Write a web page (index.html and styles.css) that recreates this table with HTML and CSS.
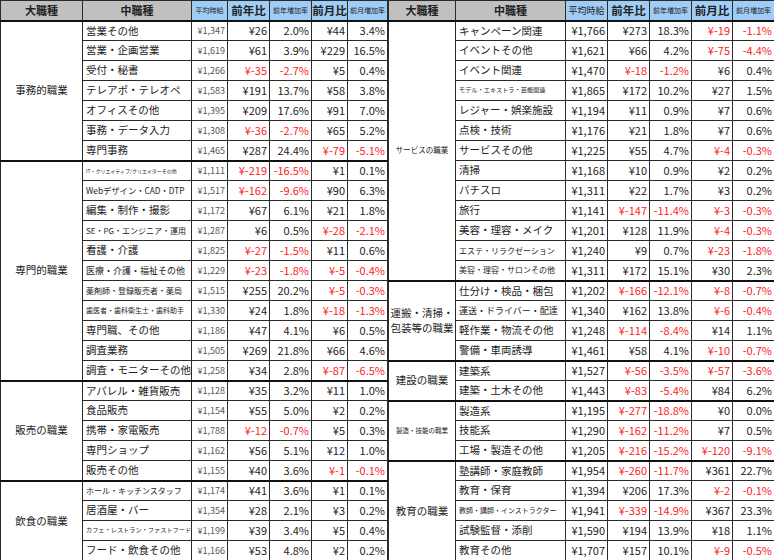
FILE: index.html
```html
<!DOCTYPE html>
<html lang="ja">
<head>
<meta charset="utf-8">
<title>職種別 平均時給</title>
<link rel="stylesheet" href="styles.css">
</head>
<body>
<div class="sheet">
<table class="t left">
<colgroup><col style="width:82px"><col style="width:109px"><col style="width:36px"><col style="width:42px"><col style="width:42px"><col style="width:36px"><col style="width:40px"></colgroup>
<thead><tr class="hd"><th class="g">大職種</th><th class="g">中職種</th><th class="b tiny">平均時給</th><th class="b big">前年比</th><th class="b tiny">前年増加率</th><th class="b big">前月比</th><th class="b tiny">前月増加率</th></tr></thead>
<tbody>
<tr><td class="cat" rowspan="7">事務的職業</td><td class="job">営業その他</td><td class="avg">¥1,347</td><td>¥26</td><td>2.0%</td><td>¥44</td><td>3.4%</td></tr>
<tr><td class="job">営業・企画営業</td><td class="avg">¥1,619</td><td>¥61</td><td>3.9%</td><td>¥229</td><td>16.5%</td></tr>
<tr><td class="job">受付・秘書</td><td class="avg">¥1,266</td><td class="n">¥-35</td><td class="n">-2.7%</td><td>¥5</td><td>0.4%</td></tr>
<tr><td class="job">テレアポ・テレオペ</td><td class="avg">¥1,583</td><td>¥191</td><td>13.7%</td><td>¥58</td><td>3.8%</td></tr>
<tr><td class="job">オフィスその他</td><td class="avg">¥1,395</td><td>¥209</td><td>17.6%</td><td>¥91</td><td>7.0%</td></tr>
<tr><td class="job">事務・データ入力</td><td class="avg">¥1,308</td><td class="n">¥-36</td><td class="n">-2.7%</td><td>¥65</td><td>5.2%</td></tr>
<tr><td class="job">専門事務</td><td class="avg">¥1,465</td><td>¥287</td><td>24.4%</td><td class="n">¥-79</td><td class="n">-5.1%</td></tr>
</tbody>
<tbody>
<tr><td class="cat" rowspan="11">専門的職業</td><td class="job s5">IT・クリエイティブ/クリエイターその他</td><td class="avg">¥1,111</td><td class="n">¥-219</td><td class="n">-16.5%</td><td>¥1</td><td>0.1%</td></tr>
<tr><td class="job s85">Webデザイン・CAD・DTP</td><td class="avg">¥1,517</td><td class="n">¥-162</td><td class="n">-9.6%</td><td>¥90</td><td>6.3%</td></tr>
<tr><td class="job">編集・制作・撮影</td><td class="avg">¥1,172</td><td>¥67</td><td>6.1%</td><td>¥21</td><td>1.8%</td></tr>
<tr><td class="job s8">SE・PG・エンジニア・運用</td><td class="avg">¥1,287</td><td>¥6</td><td>0.5%</td><td class="n">¥-28</td><td class="n">-2.1%</td></tr>
<tr><td class="job">看護・介護</td><td class="avg">¥1,825</td><td class="n">¥-27</td><td class="n">-1.5%</td><td>¥11</td><td>0.6%</td></tr>
<tr><td class="job s9">医療・介護・福祉その他</td><td class="avg">¥1,229</td><td class="n">¥-23</td><td class="n">-1.8%</td><td class="n">¥-5</td><td class="n">-0.4%</td></tr>
<tr><td class="job s8">薬剤師・登録販売者・薬局</td><td class="avg">¥1,515</td><td>¥255</td><td>20.2%</td><td class="n">¥-5</td><td class="n">-0.3%</td></tr>
<tr><td class="job s7">歯医者・歯科衛生士・歯科助手</td><td class="avg">¥1,330</td><td>¥24</td><td>1.8%</td><td class="n">¥-18</td><td class="n">-1.3%</td></tr>
<tr><td class="job">専門職、その他</td><td class="avg">¥1,186</td><td>¥47</td><td>4.1%</td><td>¥6</td><td>0.5%</td></tr>
<tr><td class="job">調査業務</td><td class="avg">¥1,505</td><td>¥269</td><td>21.8%</td><td>¥66</td><td>4.6%</td></tr>
<tr><td class="job">調査・モニターその他</td><td class="avg">¥1,258</td><td>¥34</td><td>2.8%</td><td class="n">¥-87</td><td class="n">-6.5%</td></tr>
</tbody>
<tbody>
<tr><td class="cat" rowspan="5">販売の職業</td><td class="job">アパレル・雑貨販売</td><td class="avg">¥1,128</td><td>¥35</td><td>3.2%</td><td>¥11</td><td>1.0%</td></tr>
<tr><td class="job">食品販売</td><td class="avg">¥1,154</td><td>¥55</td><td>5.0%</td><td>¥2</td><td>0.2%</td></tr>
<tr><td class="job">携帯・家電販売</td><td class="avg">¥1,788</td><td class="n">¥-12</td><td class="n">-0.7%</td><td>¥5</td><td>0.3%</td></tr>
<tr><td class="job">専門ショップ</td><td class="avg">¥1,162</td><td>¥56</td><td>5.1%</td><td>¥12</td><td>1.0%</td></tr>
<tr><td class="job">販売その他</td><td class="avg">¥1,155</td><td>¥40</td><td>3.6%</td><td class="n">¥-1</td><td class="n">-0.1%</td></tr>
</tbody>
<tbody>
<tr><td class="cat" rowspan="4">飲食の職業</td><td class="job s8">ホール・キッチンスタッフ</td><td class="avg">¥1,174</td><td>¥41</td><td>3.6%</td><td>¥1</td><td>0.1%</td></tr>
<tr><td class="job">居酒屋・バー</td><td class="avg">¥1,354</td><td>¥28</td><td>2.1%</td><td>¥3</td><td>0.2%</td></tr>
<tr><td class="job s6">カフェ・レストラン・ファストフード</td><td class="avg">¥1,199</td><td>¥39</td><td>3.4%</td><td>¥5</td><td>0.4%</td></tr>
<tr><td class="job">フード・飲食その他</td><td class="avg">¥1,166</td><td>¥53</td><td>4.8%</td><td>¥2</td><td>0.2%</td></tr>
</tbody>
</table>
<table class="t right">
<colgroup><col style="width:67px"><col style="width:110px"><col style="width:42px"><col style="width:42px"><col style="width:42px"><col style="width:41px"><col style="width:42px"></colgroup>
<thead><tr class="hd"><th class="g">大職種</th><th class="g">中職種</th><th class="b small">平均時給</th><th class="b big">前年比</th><th class="b tiny">前年増加率</th><th class="b big">前月比</th><th class="b tiny">前月増加率</th></tr></thead>
<tbody>
<tr><td class="cat c8" rowspan="13">サービスの職業</td><td class="job">キャンペーン関連</td><td>¥1,766</td><td>¥273</td><td>18.3%</td><td class="n">¥-19</td><td class="n">-1.1%</td></tr>
<tr><td class="job">イベントその他</td><td>¥1,621</td><td>¥66</td><td>4.2%</td><td class="n">¥-75</td><td class="n">-4.4%</td></tr>
<tr><td class="job">イベント関連</td><td>¥1,470</td><td class="n">¥-18</td><td class="n">-1.2%</td><td>¥6</td><td>0.4%</td></tr>
<tr><td class="job s6">モデル・エキストラ・芸能関連</td><td>¥1,865</td><td>¥172</td><td>10.2%</td><td>¥27</td><td>1.5%</td></tr>
<tr><td class="job">レジャー・娯楽施設</td><td>¥1,194</td><td>¥11</td><td>0.9%</td><td>¥7</td><td>0.6%</td></tr>
<tr><td class="job">点検・技術</td><td>¥1,176</td><td>¥21</td><td>1.8%</td><td>¥7</td><td>0.6%</td></tr>
<tr><td class="job">サービスその他</td><td>¥1,225</td><td>¥55</td><td>4.7%</td><td class="n">¥-4</td><td class="n">-0.3%</td></tr>
<tr><td class="job">清掃</td><td>¥1,168</td><td>¥10</td><td>0.9%</td><td>¥2</td><td>0.2%</td></tr>
<tr><td class="job">パチスロ</td><td>¥1,311</td><td>¥22</td><td>1.7%</td><td>¥3</td><td>0.2%</td></tr>
<tr><td class="job">旅行</td><td>¥1,141</td><td class="n">¥-147</td><td class="n">-11.4%</td><td class="n">¥-3</td><td class="n">-0.3%</td></tr>
<tr><td class="job">美容・理容・メイク</td><td>¥1,201</td><td>¥128</td><td>11.9%</td><td class="n">¥-4</td><td class="n">-0.3%</td></tr>
<tr><td class="job s8">エステ・リラクゼーション</td><td>¥1,240</td><td>¥9</td><td>0.7%</td><td class="n">¥-23</td><td class="n">-1.8%</td></tr>
<tr><td class="job s8">美容・理容・サロンその他</td><td>¥1,311</td><td>¥172</td><td>15.1%</td><td>¥30</td><td>2.3%</td></tr>
</tbody>
<tbody>
<tr><td class="cat" rowspan="4">運搬・清掃・<br>包装等の職業</td><td class="job">仕分け・検品・梱包</td><td>¥1,202</td><td class="n">¥-166</td><td class="n">-12.1%</td><td class="n">¥-8</td><td class="n">-0.7%</td></tr>
<tr><td class="job s9">運送・ドライバー・配達</td><td>¥1,340</td><td>¥162</td><td>13.8%</td><td class="n">¥-6</td><td class="n">-0.4%</td></tr>
<tr><td class="job">軽作業・物流その他</td><td>¥1,248</td><td class="n">¥-114</td><td class="n">-8.4%</td><td>¥14</td><td>1.1%</td></tr>
<tr><td class="job">警備・車両誘導</td><td>¥1,461</td><td>¥58</td><td>4.1%</td><td class="n">¥-10</td><td class="n">-0.7%</td></tr>
</tbody>
<tbody>
<tr><td class="cat" rowspan="2">建設の職業</td><td class="job">建築系</td><td>¥1,527</td><td class="n">¥-56</td><td class="n">-3.5%</td><td class="n">¥-57</td><td class="n">-3.6%</td></tr>
<tr><td class="job">建築・土木その他</td><td>¥1,443</td><td class="n">¥-83</td><td class="n">-5.4%</td><td>¥84</td><td>6.2%</td></tr>
</tbody>
<tbody>
<tr><td class="cat c7" rowspan="3">製造・技能の職業</td><td class="job">製造系</td><td>¥1,195</td><td class="n">¥-277</td><td class="n">-18.8%</td><td>¥0</td><td>0.0%</td></tr>
<tr><td class="job">技能系</td><td>¥1,290</td><td class="n">¥-162</td><td class="n">-11.2%</td><td>¥7</td><td>0.5%</td></tr>
<tr><td class="job">工場・製造その他</td><td>¥1,205</td><td class="n">¥-216</td><td class="n">-15.2%</td><td class="n">¥-120</td><td class="n">-9.1%</td></tr>
</tbody>
<tbody>
<tr><td class="cat" rowspan="5">教育の職業</td><td class="job">塾講師・家庭教師</td><td>¥1,954</td><td class="n">¥-260</td><td class="n">-11.7%</td><td>¥361</td><td>22.7%</td></tr>
<tr><td class="job">教育・保育</td><td>¥1,394</td><td>¥206</td><td>17.3%</td><td class="n">¥-2</td><td class="n">-0.1%</td></tr>
<tr><td class="job s7">教師・講師・インストラクター</td><td>¥1,941</td><td class="n">¥-339</td><td class="n">-14.9%</td><td>¥367</td><td>23.3%</td></tr>
<tr><td class="job">試験監督・添削</td><td>¥1,590</td><td>¥194</td><td>13.9%</td><td>¥18</td><td>1.1%</td></tr>
<tr><td class="job">教育その他</td><td>¥1,707</td><td>¥157</td><td>10.1%</td><td class="n">¥-9</td><td class="n">-0.5%</td></tr>
</tbody>
</table>
</div>
</body>
</html>
```
FILE: styles.css
```css
html, body {
  margin: 0;
  padding: 0;
  background: #ffffff;
}
body {
  font-family: "Noto Sans CJK JP", "Noto Sans", sans-serif;
  color: #222222;
  width: 774px;
  height: 560px;
  overflow: hidden;
}
.sheet {
  display: flex;
  align-items: flex-start;
}
.t {
  border-collapse: collapse;
  table-layout: fixed;
  border: 1px solid #111;
}
.t.left { width: 387px; }
.t.right { width: 386px; }
.t th, .t td {
  border: 1px solid #2a2a2a;
  padding: 0 2px;
  white-space: nowrap;
  overflow: hidden;
  line-height: 1;
  font-size: 11px;
  text-align: right;
}
.hd { height: 20px; }
.t tbody tr { height: 20px; }
.t tbody { border-top: 2px solid #111; }
.t th {
  text-align: center;
  font-weight: bold;
  color: #222;
  padding: 0;
}
.t th.g { background: #c0c0c0; font-size: 11px; }
.t th.b { background: #9fcdf6; }
.t th.big { font-size: 11.5px; }
.t th.tiny { font-size: 7px; font-weight: normal; }
.t th.small { font-size: 9px; font-weight: normal; }
.t td.cat {
  text-align: center;
  font-size: 10.5px;
  line-height: 1.35;
  padding: 0;
}
.t td.cat.c8 { font-size: 7.5px; }
.t td.cat.c7 { font-size: 6.5px; }
.t td.job {
  text-align: left;
  font-size: 10.5px;
  padding-left: 3px;
}
.t td.job.s9 { font-size: 9px; }
.t td.job.s85 { font-size: 8.3px; }
.t td.job.s8 { font-size: 8px; }
.t td.job.s7 { font-size: 7px; }
.t td.job.s6 { font-size: 6.2px; }
.t td.job.s5 { font-size: 5px; }
.t td.avg {
  font-size: 9px;
  color: #555;
}
.t td.n { color: #ff1a1a; }
```
